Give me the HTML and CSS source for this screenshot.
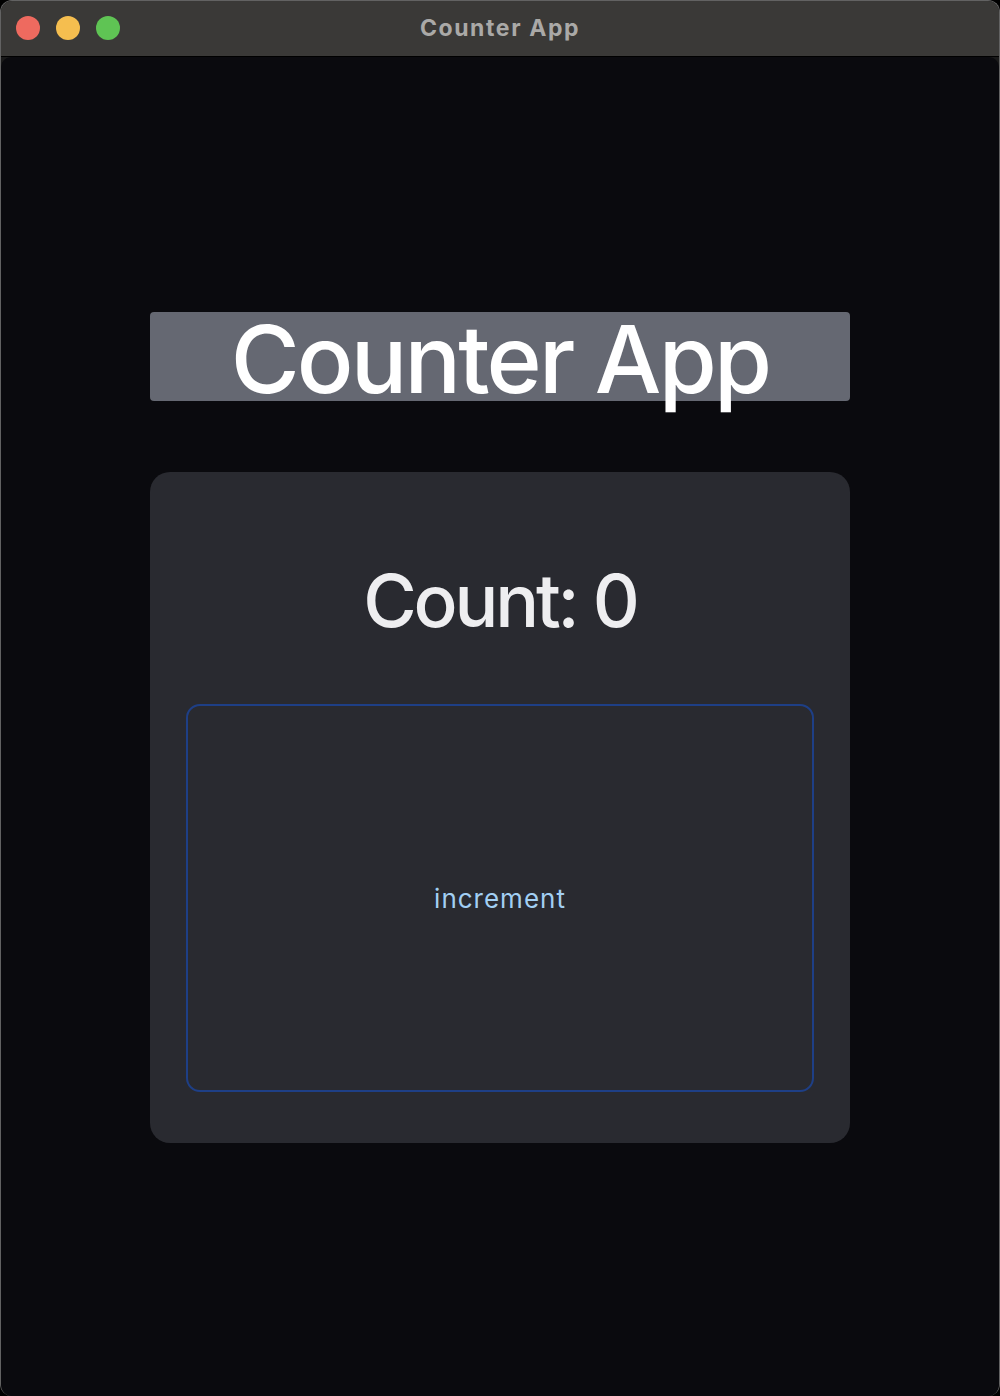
FILE: index.html
```html
<!DOCTYPE html>
<html>
<head>
<meta charset="utf-8">
<link rel="stylesheet" href="styles.css">
</head>
<body>
<div class="window">
  <div class="titlebar">
    <div class="lights">
      <span class="light red"></span>
      <span class="light yellow"></span>
      <span class="light green"></span>
    </div>
    <div class="wtitle">Counter App</div>
  </div>
  <div class="content">
    <h1 class="heading">Counter App</h1>
    <div class="card">
      <div class="count">Count: 0</div>
      <button class="btn">increment</button>
    </div>
  </div>
</div>
</body>
</html>
```
FILE: styles.css
```css
html, body {
  margin: 0;
  padding: 0;
  background: #000;
}
body {
  width: 1000px;
  height: 1396px;
  font-family: Inter, "Liberation Sans", Arial, sans-serif;
}
.window {
  box-sizing: border-box;
  width: 1000px;
  height: 1396px;
  border: 1px solid #626262;
  border-bottom: none;
  border-radius: 12px;
  background: #1a1a1a;
  overflow: hidden;
  display: flex;
  flex-direction: column;
}
.titlebar {
  position: relative;
  height: 55px;
  flex: 0 0 55px;
  background: #3a3937;
  border-bottom: 1px solid #000;
  display: flex;
  align-items: center;
  justify-content: center;
}
.lights {
  position: absolute;
  left: 15px;
  top: 15px;
  display: flex;
  gap: 16px;
}
.light {
  width: 24px;
  height: 24px;
  border-radius: 50%;
  display: block;
}
.red { background: #ee6a5f; }
.yellow { background: #f5be4f; }
.green { background: #5fc454; }
.wtitle {
  color: #aaa9a7;
  font-weight: 700;
  font-size: 23px;
  letter-spacing: 1.6px;
  margin-top: -2px;
}
.content {
  flex: 1;
  background: #0a0a0e;
  border-radius: 10px 10px 0 0;
  padding-top: 2px;
  display: flex;
  flex-direction: column;
  align-items: center;
  justify-content: center;
  gap: 71px;
}
.heading {
  margin: 0;
  width: 700px;
  height: 89px;
  line-height: 95px;
  font-size: 94px;
  font-weight: 500;
  text-align: center;
  color: #ffffff;
  background: #656872;
  border-radius: 4px;
  letter-spacing: -2.8px;
}
.card {
  box-sizing: border-box;
  width: 700px;
  height: 671px;
  background: #292a30;
  border-radius: 20px;
  padding: 89px 36px 51px;
  display: flex;
  flex-direction: column;
  align-items: center;
}
.count {
  font-size: 73px;
  line-height: 80px;
  font-weight: 500;
  color: #eeeef0;
  margin-bottom: 63px;
  letter-spacing: -3.2px;
}
.btn {
  box-sizing: border-box;
  width: 628px;
  height: 388px;
  background: transparent;
  border: 2px solid #1e3f86;
  border-radius: 14px;
  color: #a2cff3;
  font-family: Inter, "Liberation Sans", Arial, sans-serif;
  font-size: 26px;
  letter-spacing: 1px;
  padding: 0;
  cursor: pointer;
}
```
